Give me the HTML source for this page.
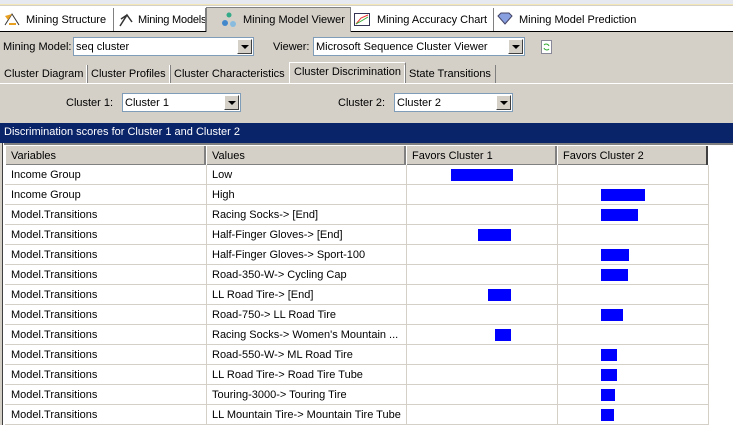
<!DOCTYPE html>
<html><head><style>
*{margin:0;padding:0;box-sizing:border-box}
body{width:733px;height:425px;overflow:hidden;background:#d4d0c8;font-family:"Liberation Sans",sans-serif;font-size:11px;color:#000;position:relative}
.a{position:absolute;white-space:nowrap}
.tab{position:absolute;top:8px;height:23px;line-height:24px;padding-left:26px;border-right:1px solid #808080;white-space:nowrap;overflow:hidden}
.st{position:absolute;top:65px;height:18px;line-height:18px;padding:0 4px;border-right:1px solid #808080;border-left:1px solid #fff;white-space:nowrap}
.combo{position:absolute;background:#fff;border:1px solid #7f9db9;height:19px;line-height:18px;padding-left:2px;white-space:nowrap}
.combo b{position:absolute;right:1px;top:1px;width:15px;height:15px;background:#d4d0c8;border:1px solid;border-color:#fff #404040 #404040 #fff}
.combo b:after{content:"";position:absolute;left:3px;top:5px;border:4px solid transparent;border-top:4px solid #000;border-bottom:0}
.row{position:absolute;left:5px;width:703px;height:20px;border-bottom:1px solid #d4d0c8}
.row span{position:absolute;top:4px;white-space:nowrap}
.bar{position:absolute;height:12px;background:#0000ff}
</style></head><body>
<div class="a" style="left:0;top:0;width:733px;height:5px;background:#e6e9f0;border-bottom:1px solid #f3e7b8"></div>
<div class="a" style="left:0;top:6px;width:733px;height:26px;background:#fff;border-bottom:1px solid #000"></div>
<div class="tab" style="left:0;width:114px;padding-left:26px">Mining Structure</div>
<svg class="a" style="left:4px;top:12px" width="16" height="14"><path d="M1 13 L8 2 L15 13" stroke="#333" fill="none"/><path d="M1 4 L8 2 L4 8Z" fill="#e8a020"/><path d="M5 12 L12 12" stroke="#e8a020" stroke-width="2"/></svg>
<div class="tab" style="left:114px;width:92px;padding-left:24px;letter-spacing:-0.2px">Mining Models</div>
<svg class="a" style="left:118px;top:13px" width="16" height="14"><path d="M2 13 L9 2 L14 9 M3 6 L9 2" stroke="#333" fill="none" stroke-width="1.5"/></svg>
<div class="tab" style="left:206px;top:7px;height:25px;width:145px;background:#d4d0c8;border:1px solid #808080;border-bottom:none;padding-left:36px">Mining Model Viewer</div>
<svg class="a" style="left:221px;top:12px" width="16" height="16"><circle cx="8" cy="3" r="2.5" fill="#3a8"/><circle cx="4" cy="11" r="3" fill="#48c"/><circle cx="12" cy="12" r="3" fill="#8bd"/></svg>
<div class="tab" style="left:351px;width:143px;padding-left:26px">Mining Accuracy Chart</div>
<svg class="a" style="left:354px;top:13px" width="16" height="13"><rect x=".5" y=".5" width="15" height="12" fill="#fff" stroke="#335"/><path d="M2 11 L7 5 L14 2" stroke="#e33" fill="none"/><path d="M2 11 L9 7 L14 4" stroke="#3a3" fill="none"/></svg>
<div class="tab" style="left:494px;width:160px;border-right:none;padding-left:25px">Mining Model Prediction</div>
<svg class="a" style="left:497px;top:12px" width="16" height="13"><path d="M1 4 L4 1 L12 1 L15 4 L8 12Z" fill="#88a0e0" stroke="#446"/></svg>

<div class="a" style="left:3px;top:41px">Mining Model:</div>
<div class="combo" style="left:73px;top:37px;width:181px">seq cluster<b></b></div>
<div class="a" style="left:273px;top:41px">Viewer:</div>
<div class="combo" style="left:313px;top:37px;width:212px">Microsoft Sequence Cluster Viewer<b></b></div>
<svg class="a" style="left:541px;top:40px" width="12" height="14"><rect x=".5" y=".5" width="10" height="13" fill="#fff" stroke="#889"/><path d="M3 5 A3 3 0 0 1 8 6 M8 9 A3 3 0 0 1 3 8" stroke="#3a3" fill="none"/></svg>

<div class="st" style="left:0;border-left:none">Cluster Diagram</div>
<div class="st" style="left:86px">Cluster Profiles</div>
<div class="st" style="left:169px">Cluster Characteristics</div>
<div class="st" style="left:289px;top:62px;height:22px;border:1px solid #fff;border-right-color:#808080;border-bottom:none;background:#d4d0c8">Cluster Discrimination</div>
<div class="st" style="left:404px">State Transitions</div>
<div class="a" style="left:0;top:83px;width:733px;height:1px;background:#fff"></div>

<div class="a" style="left:66px;top:97px">Cluster 1:</div>
<div class="combo" style="left:122px;top:93px;width:119px">Cluster 1<b></b></div>
<div class="a" style="left:338px;top:97px">Cluster 2:</div>
<div class="combo" style="left:394px;top:93px;width:119px">Cluster 2<b></b></div>

<div class="a" style="left:0;top:123px;width:733px;height:20px;background:#0a246a;color:#fff;line-height:18px;padding-left:4px">Discrimination scores for Cluster 1 and Cluster 2</div>
<div class="a" style="left:0;top:143px;width:733px;height:282px;background:#fff"></div>
<div class="a" style="left:0;top:143px;width:3px;height:282px;background:#d4d0c8;border-right:1px solid #404040"></div>
<div class="a" style="left:4px;top:143px;width:729px;height:2px;background:#808080"></div>
<div class="a" style="left:5px;top:146px;width:703px;height:19px;background:#d4d0c8;border-bottom:1px solid #808080"></div>
<div class="a" style="left:5px;top:146px;width:201px;height:19px;border-right:2px solid #808080;border-left:1px solid #fff;padding:4px 0 0 5px">Variables</div>
<div class="a" style="left:206px;top:146px;width:200px;height:19px;border-right:2px solid #808080;border-left:1px solid #fff;padding:4px 0 0 5px">Values</div>
<div class="a" style="left:406px;top:146px;width:151px;height:19px;border-right:2px solid #808080;border-left:1px solid #fff;padding:4px 0 0 5px">Favors Cluster 1</div>
<div class="a" style="left:557px;top:146px;width:151px;height:19px;border-right:2px solid #404040;border-left:1px solid #fff;padding:4px 0 0 5px">Favors Cluster 2</div>
<div class="a" style="left:206px;top:165px;width:1px;height:260px;background:#d4d0c8"></div>
<div class="a" style="left:406px;top:165px;width:1px;height:260px;background:#d4d0c8"></div>
<div class="a" style="left:557px;top:165px;width:1px;height:260px;background:#d4d0c8"></div>
<div class="a" style="left:708px;top:165px;width:1px;height:260px;background:#d4d0c8"></div>

<div class="row" style="top:165px"><span style="left:6px">Income Group</span><span style="left:207px">Low</span></div>
<div class="row" style="top:185px"><span style="left:6px">Income Group</span><span style="left:207px">High</span></div>
<div class="row" style="top:205px"><span style="left:6px">Model.Transitions</span><span style="left:207px">Racing Socks-&gt; [End]</span></div>
<div class="row" style="top:225px"><span style="left:6px">Model.Transitions</span><span style="left:207px">Half-Finger Gloves-&gt; [End]</span></div>
<div class="row" style="top:245px"><span style="left:6px">Model.Transitions</span><span style="left:207px">Half-Finger Gloves-&gt; Sport-100</span></div>
<div class="row" style="top:265px"><span style="left:6px">Model.Transitions</span><span style="left:207px">Road-350-W-&gt; Cycling Cap</span></div>
<div class="row" style="top:285px"><span style="left:6px">Model.Transitions</span><span style="left:207px">LL Road Tire-&gt; [End]</span></div>
<div class="row" style="top:305px"><span style="left:6px">Model.Transitions</span><span style="left:207px">Road-750-&gt; LL Road Tire</span></div>
<div class="row" style="top:325px"><span style="left:6px">Model.Transitions</span><span style="left:207px">Racing Socks-&gt; Women's Mountain ...</span></div>
<div class="row" style="top:345px"><span style="left:6px">Model.Transitions</span><span style="left:207px">Road-550-W-&gt; ML Road Tire</span></div>
<div class="row" style="top:365px"><span style="left:6px">Model.Transitions</span><span style="left:207px">LL Road Tire-&gt; Road Tire Tube</span></div>
<div class="row" style="top:385px"><span style="left:6px">Model.Transitions</span><span style="left:207px">Touring-3000-&gt; Touring Tire</span></div>
<div class="row" style="top:405px"><span style="left:6px">Model.Transitions</span><span style="left:207px">LL Mountain Tire-&gt; Mountain Tire Tube</span></div>

<div class="bar" style="left:451px;top:169px;width:62px"></div>
<div class="bar" style="left:601px;top:189px;width:44px"></div>
<div class="bar" style="left:601px;top:209px;width:37px"></div>
<div class="bar" style="left:478px;top:229px;width:33px"></div>
<div class="bar" style="left:601px;top:249px;width:28px"></div>
<div class="bar" style="left:601px;top:269px;width:27px"></div>
<div class="bar" style="left:488px;top:289px;width:23px"></div>
<div class="bar" style="left:601px;top:309px;width:22px"></div>
<div class="bar" style="left:495px;top:329px;width:16px"></div>
<div class="bar" style="left:601px;top:349px;width:16px"></div>
<div class="bar" style="left:601px;top:369px;width:16px"></div>
<div class="bar" style="left:601px;top:389px;width:14px"></div>
<div class="bar" style="left:601px;top:409px;width:13px"></div>
</body></html>
